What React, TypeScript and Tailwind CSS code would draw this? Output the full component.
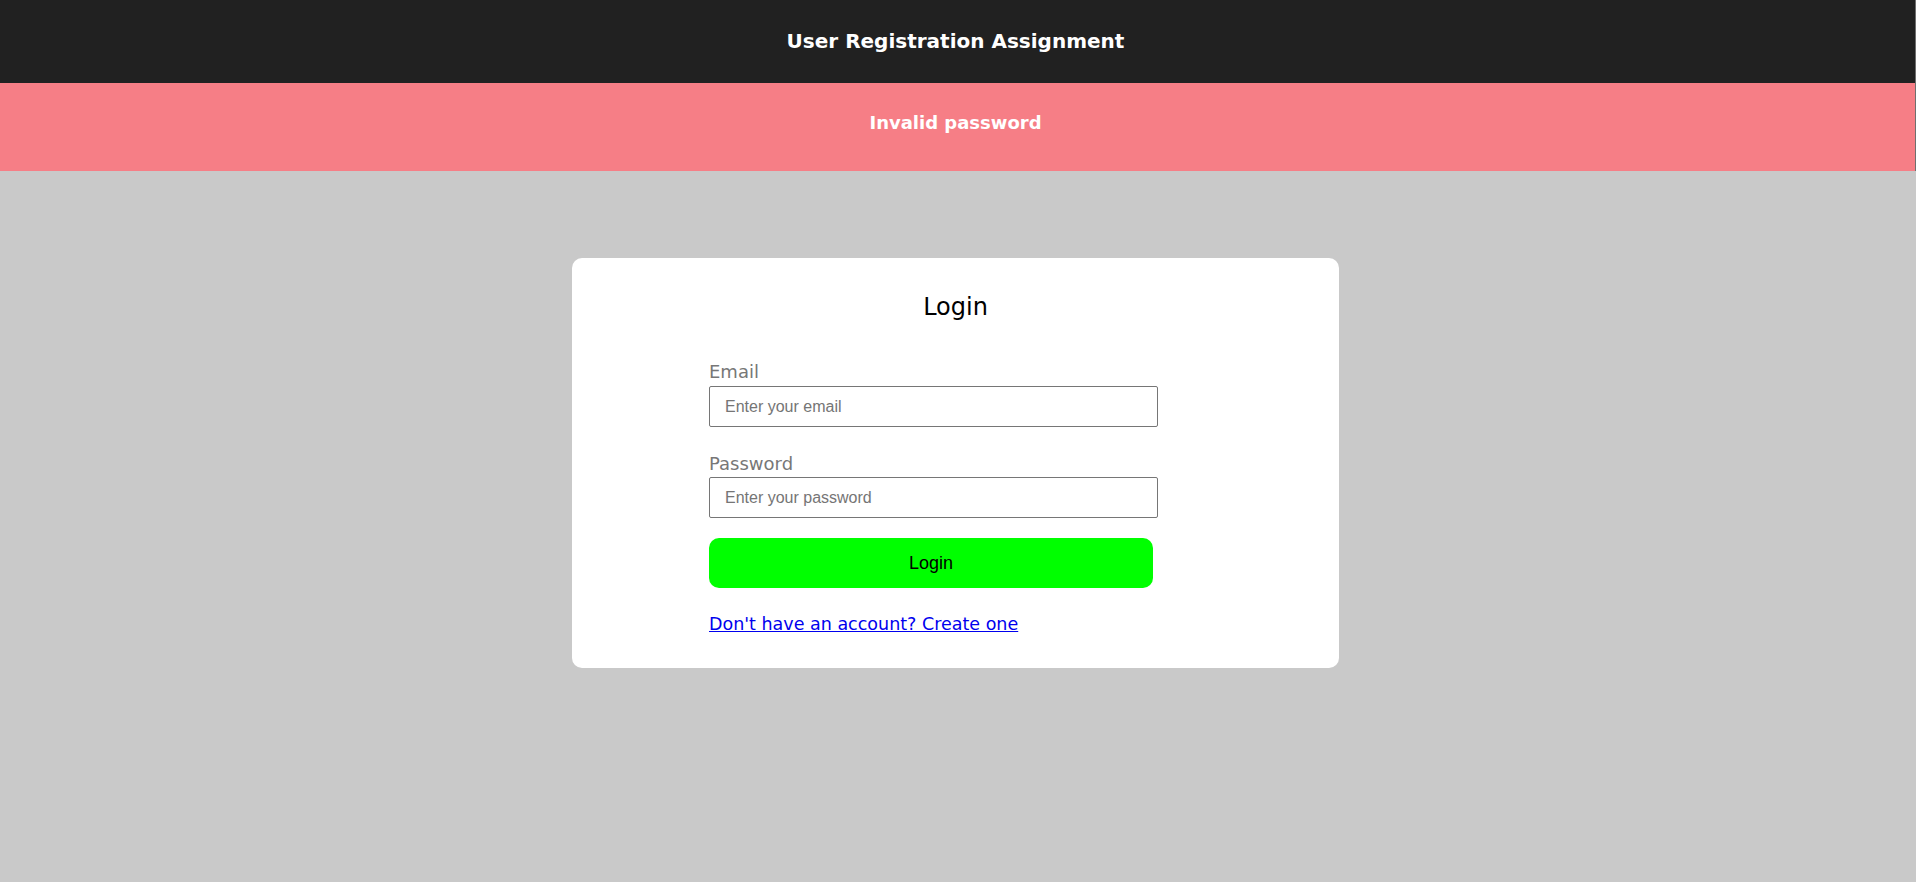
import { useState } from 'react'

export default function App() {
  const [email, setEmail] = useState('')
  const [password, setPassword] = useState('')

  return (
    <div className="min-h-[882px] bg-[#c9c9c9] font-['DejaVu_Sans',Inter,sans-serif]">
      <header className="flex h-[83px] items-center justify-center border-r border-[#6f6f6f] bg-[#212121] pr-[4px] pb-[2px]">
        <h1 className="text-[20px] font-semibold text-white">User Registration Assignment</h1>
      </header>
      <div className="flex h-[88px] items-center justify-center border-r border-[#6f6f6f] bg-[#f67e86] pr-[4px] pb-[10px]">
        <p className="text-[18px] font-semibold text-white">Invalid password</p>
      </div>

      <div className="flex justify-center pt-[87px] pr-[5px]">
        <div className="w-[767px] rounded-[10px] bg-white pt-[33px] pb-[32px]">
          <h2 className="text-center text-[24px] leading-8 font-medium text-black">Login</h2>

          <form className="mt-[35px] flex w-[586px] flex-col pl-[137px]" onSubmit={(e) => e.preventDefault()}>
            <label className="text-[18px] leading-[27px] text-[#777777]">Email</label>
            <input
              type="email"
              value={email}
              onChange={(e) => setEmail(e.target.value)}
              placeholder="Enter your email"
              className="mt-px h-[41px] w-[449px] rounded-[2px] border border-[#767676] px-[15px] font-['Liberation_Sans',Arial,sans-serif] text-[16px] text-black placeholder:text-[#757575] outline-none"
            />

            <label className="mt-[23px] text-[18px] leading-[27px] text-[#777777]">Password</label>
            <input
              type="password"
              value={password}
              onChange={(e) => setPassword(e.target.value)}
              placeholder="Enter your password"
              className="h-[41px] w-[449px] rounded-[2px] border border-[#767676] px-[15px] font-['Liberation_Sans',Arial,sans-serif] text-[16px] text-black placeholder:text-[#757575] outline-none"
            />

            <button
              type="submit"
              className="mt-[20px] h-[50px] w-[444px] rounded-[10px] bg-[#00ff00] font-['Liberation_Sans',Arial,sans-serif] text-[18px] text-black"
            >
              Login
            </button>

            <a href="#" className="mt-[24px] self-start text-[17.5px] leading-6 text-[#0000ee] underline">
              Don't have an account? Create one
            </a>
          </form>
        </div>
      </div>
    </div>
  )
}
